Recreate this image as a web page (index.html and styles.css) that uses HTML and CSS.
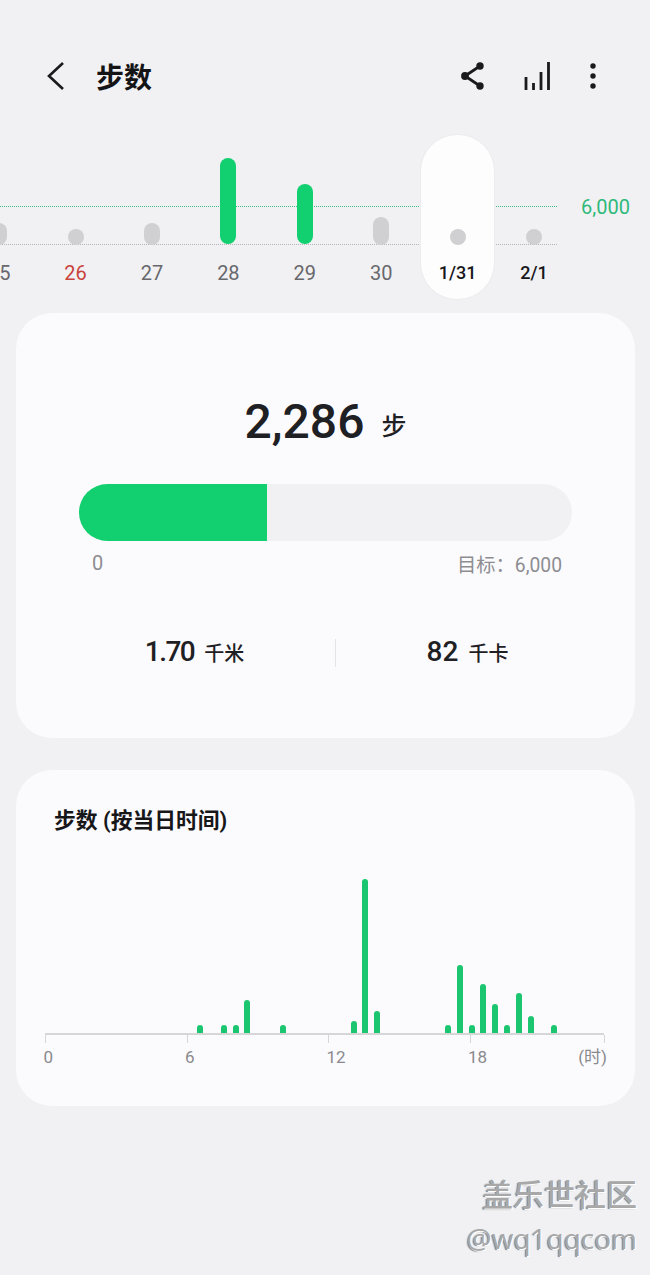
FILE: index.html
```html
<!DOCTYPE html>
<html>
  <head>
    <title>步数</title>
    <link rel="stylesheet" href="styles.css">
  </head>
  <body>
    <header class="topbar">
      <svg class="back" width="20" height="30" viewBox="0 0 20 30"><path d="M17 2 L3 15 L17 28" /></svg>
      <h1 class="title">步数</h1>
      <div class="actions">
        <svg class="icon" width="28" height="30" viewBox="0 0 28 30">
          <path class="icon-line" d="M21 5 L6 15 L21 25" />
          <circle cx="21" cy="5" r="3.7" />
          <circle cx="6" cy="15" r="3.9" />
          <circle cx="21" cy="25" r="3.7" />
        </svg>
        <svg class="icon" width="30" height="30" viewBox="0 0 30 30">
          <path class="icon-line" d="M3 29 V16 M10.5 29 V22 M18 29 V11 M25.5 29 V1" />
        </svg>
        <svg class="icon" width="8" height="30" viewBox="0 0 8 30">
          <circle cx="4" cy="5" r="2.7" />
          <circle cx="4" cy="15" r="2.7" />
          <circle cx="4" cy="25" r="2.7" />
        </svg>
      </div>
    </header>

    <section class="week">
      <div class="goal-line"></div>
      <div class="base-line"></div>
      <span class="goal-label">6,000</span>
      <div class="days">
        <div class="day"><div class="bar bar-off h22"></div><span class="day-label">25</span></div>
        <div class="day"><div class="bar bar-off h16"></div><span class="day-label red">26</span></div>
        <div class="day"><div class="bar bar-off h22"></div><span class="day-label">27</span></div>
        <div class="day"><div class="bar bar-on h86"></div><span class="day-label">28</span></div>
        <div class="day"><div class="bar bar-on h60"></div><span class="day-label">29</span></div>
        <div class="day"><div class="bar bar-off h28"></div><span class="day-label">30</span></div>
        <div class="day selected"><div class="bar bar-off h16"></div><span class="day-label strong">1/31</span></div>
        <div class="day"><div class="bar bar-off h16"></div><span class="day-label strong">2/1</span></div>
      </div>
    </section>

    <section class="card summary">
      <div class="total"><span class="total-num">2,286</span><span class="total-unit">步</span></div>
      <div class="progress"><div class="progress-fill"></div></div>
      <div class="progress-labels"><span>0</span><span class="target">目标：6,000</span></div>
      <div class="stats">
        <div class="stat"><b>1.70</b><span>千米</span></div>
        <div class="stat"><b>82</b><span>千卡</span></div>
      </div>
    </section>

    <section class="card hourly">
      <h2 class="card-title">步数 (按当日时间)</h2>
      <div class="plot">
        <div class="slot"></div><div class="slot"></div><div class="slot"></div><div class="slot"></div>
        <div class="slot"></div><div class="slot"></div><div class="slot"></div><div class="slot"></div>
        <div class="slot"></div><div class="slot"></div><div class="slot"></div><div class="slot"></div>
        <div class="slot"></div>
        <div class="slot"><i style="height:8px"></i></div>
        <div class="slot"></div>
        <div class="slot"><i style="height:8px"></i></div>
        <div class="slot"><i style="height:8px"></i></div>
        <div class="slot"><i style="height:33px"></i></div>
        <div class="slot"></div><div class="slot"></div>
        <div class="slot"><i style="height:8px"></i></div>
        <div class="slot"></div><div class="slot"></div><div class="slot"></div><div class="slot"></div><div class="slot"></div>
        <div class="slot"><i style="height:12px"></i></div>
        <div class="slot"><i style="height:154px"></i></div>
        <div class="slot"><i style="height:22px"></i></div>
        <div class="slot"></div><div class="slot"></div><div class="slot"></div><div class="slot"></div><div class="slot"></div>
        <div class="slot"><i style="height:8px"></i></div>
        <div class="slot"><i style="height:68px"></i></div>
        <div class="slot"><i style="height:8px"></i></div>
        <div class="slot"><i style="height:49px"></i></div>
        <div class="slot"><i style="height:29px"></i></div>
        <div class="slot"><i style="height:8px"></i></div>
        <div class="slot"><i style="height:40px"></i></div>
        <div class="slot"><i style="height:17px"></i></div>
        <div class="slot"></div>
        <div class="slot"><i style="height:8px"></i></div>
      </div>
      <div class="axis">
        <span class="tick">0</span>
        <span class="tick">6</span>
        <span class="tick">12</span>
        <span class="tick tick-last">18</span>
        <span class="tick tick-end">(时)</span>
      </div>
    </section>

    <div class="watermark">
      <div class="wm-name">盖乐世社区</div>
      <div class="wm-user">@wq1qqcom</div>
    </div>
  </body>
</html>
```

FILE: styles.css
```css
html,
body {
  margin: 0;
  height: 1275px;
  overflow: hidden;
}
body {
  position: relative;
  background-color: #f1f1f3;
  color: #1f2023;
  font-family: Roboto, "Noto Sans CJK SC", sans-serif;
}

/* top bar */
.topbar {
  display: flex;
  align-items: center;
  height: 60px;
  padding: 46px 53px 0 46px;
}
.back {
  fill: none;
  stroke: #1a1a1c;
  stroke-width: 2.6;
}
.title {
  margin: 0 0 0 30px;
  font-size: 28px;
  font-weight: 700;
  color: #141416;
}
.actions {
  display: flex;
  align-items: center;
  margin-left: auto;
  gap: 36px;
}
.icon {
  fill: #1a1a1c;
}
.icon-line {
  fill: none;
  stroke: #1a1a1c;
  stroke-width: 2.8;
}

/* week chart */
.week {
  position: relative;
  height: 166px;
  margin-top: 28px;
}
.goal-line,
.base-line {
  position: absolute;
  left: 0;
  width: 557px;
  border-top: 1px dotted #b4b4b8;
}
.goal-line {
  top: 72px;
  border-top-color: #39bd80;
}
.base-line {
  top: 110px;
}
.goal-label {
  position: absolute;
  left: 581px;
  top: 61px;
  font-size: 20px;
  color: #2fb97a;
}
.days {
  position: relative;
  display: flex;
  margin-left: -39px;
}
.day {
  display: flex;
  flex-direction: column;
  align-items: center;
  justify-content: flex-end;
  flex: 0 0 76.4px;
  height: 166px;
  box-sizing: border-box;
}
.day.selected {
  flex: 0 0 75px;
  margin: 0 0.7px;
  background: #fdfdfe;
  border: 1px solid #ececee;
  border-radius: 37px;
}
.bar {
  width: 16px;
  border-radius: 8px;
}
.bar-on {
  background: #12cf6f;
}
.bar-off {
  margin-bottom: -1px;
  background: #d0d0d2;
}
.h16 { height: 16px; }
.h22 { height: 22px; }
.h28 { height: 28px; }
.h60 { height: 60px; }
.h86 { height: 86px; }
.day-label {
  margin: 18px 0 16px;
  font-size: 20px;
  line-height: 22px;
  color: #68686c;
}
.day-label.red {
  color: #c8443c;
}
.day-label.strong {
  font-size: 18px;
  font-weight: 500;
  color: #17171a;
}
.selected .day-label {
  margin-bottom: 15px;
}

/* cards */
.card {
  margin: 0 15px 0 16px;
  background: #fbfbfd;
  border-radius: 36px;
}
.summary {
  height: 425px;
  margin-top: 13px;
  padding: 0 63px;
  box-sizing: border-box;
}
.total {
  display: flex;
  justify-content: center;
  align-items: center;
  padding-top: 79px;
  line-height: 60px;
}
.total-num {
  font-size: 48px;
  font-weight: 500;
}
.total-unit {
  margin: 10px 0 0 17px;
  font-size: 25px;
  line-height: 30px;
  font-weight: 500;
}
.progress {
  height: 57px;
  margin-top: 32px;
  background: #f1f1f3;
  border-radius: 29px;
  overflow: hidden;
}
.progress-fill {
  width: 188px;
  height: 100%;
  background: #12cf6f;
}
.progress-labels {
  display: flex;
  justify-content: space-between;
  padding: 11px 10px 0 13px;
  font-size: 20px;
  line-height: 22px;
  color: #8d8d91;
}
.target {
  margin-top: 3px;
  font-size: 19.3px;
}
.stats {
  display: flex;
  align-items: center;
  margin: 62px -27px 0 -25px;
}
.stat {
  display: flex;
  flex: 1;
  justify-content: center;
  align-items: baseline;
  gap: 10px;
  line-height: 26px;
}
.stat:first-child {
  flex: 0 0 281px;
}
.stat:first-child b {
  letter-spacing: -1.5px;
}
.stat + .stat {
  border-left: 1px solid #e4e4e6;
}
.stat b {
  font-size: 28px;
  font-weight: 500;
}
.stat span {
  font-size: 20px;
  font-weight: 500;
}
.hourly {
  height: 336px;
  margin-top: 32px;
  padding: 37px 29px 0;
  box-sizing: border-box;
}
.card-title {
  margin: 0;
  padding-left: 9px;
  font-size: 21.8px;
  line-height: 28px;
  font-weight: 700;
  color: #17171a;
}
.plot {
  display: flex;
  align-items: flex-end;
  height: 198px;
  margin-left: -4px;
}
.slot {
  display: flex;
  justify-content: center;
  flex: 0 0 11.8px;
}
.slot i {
  display: block;
  width: 6px;
  border-radius: 3px 3px 0 0;
  background: #1cc56f;
}
.axis {
  display: flex;
  width: 559px;
  border-top: 2px solid #d6d6d9;
  font-size: 17px;
  color: #8a8a8e;
}
.tick {
  flex: 0 0 141.5px;
  box-sizing: border-box;
  height: 32px;
  padding-top: 11px;
  line-height: 22px;
  text-indent: -1.5px;
  background: linear-gradient(#d6d6d9, #d6d6d9) no-repeat 0 0 / 1px 8px;
}
.tick-last {
  flex: 0 0 134.5px;
}
.tick-end {
  flex: 0 0 31px;
  margin-left: -28px;
  text-align: right;
  text-indent: 0;
  white-space: nowrap;
  background-position: 28px 0;
}

/* watermark lies over the page */
.watermark {
  position: absolute;
  right: 13px;
  top: 1177px;
  text-align: right;
  color: #a8a8a8;
  text-shadow: 1px 1px 0 #fff, -1px 1px 1px #7f7f7f;
}
.wm-name {
  font-size: 31px;
  line-height: 38px;
  font-weight: 500;
}
.wm-user {
  margin-top: 5px;
  font-size: 28px;
  line-height: 36px;
  font-family: "Open Sans", sans-serif;
}
```
